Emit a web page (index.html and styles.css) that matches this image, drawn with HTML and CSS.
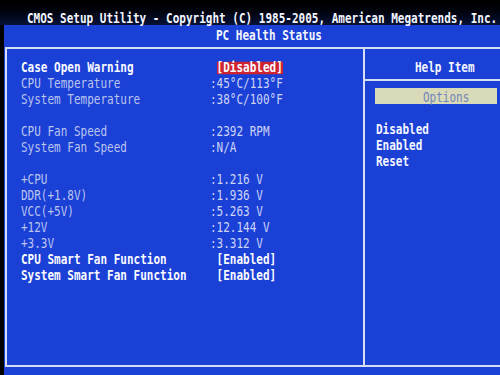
FILE: index.html
```html
<!DOCTYPE html>
<html lang="en">
<head>
    <meta charset="UTF-8">
    <meta name="viewport" content="width=device-width, initial-scale=1.0">
    <title>PC Health Status</title>
    <link rel="stylesheet" href="styles.css">
</head>
<body>
    <div class="monitor">
        <div class="topbar">
            <div class="row bright">CMOS Setup Utility - Copyright (C) 1985-2005, American Megatrends, Inc.</div>
        </div>

        <div class="screen">
            <div class="subtitle">
                <div class="row bright">PC Health Status</div>
            </div>

            <div class="frame">
                <div class="main">
                    <div class="row"><span class="label hi">Case Open Warning</span><span class="value"><span class="opt sel">[Disabled]</span></span></div>
                    <div class="row"><span class="label">CPU Temperature</span><span class="value">:45°C/113°F</span></div>
                    <div class="row"><span class="label">System Temperature</span><span class="value">:38°C/100°F</span></div>
                    <div class="row"></div>
                    <div class="row"><span class="label">CPU Fan Speed</span><span class="value">:2392 RPM</span></div>
                    <div class="row"><span class="label">System Fan Speed</span><span class="value">:N/A</span></div>
                    <div class="row"></div>
                    <div class="row"><span class="label">+CPU</span><span class="value">:1.216 V</span></div>
                    <div class="row"><span class="label">DDR(+1.8V)</span><span class="value">:1.936 V</span></div>
                    <div class="row"><span class="label">VCC(+5V)</span><span class="value">:5.263 V</span></div>
                    <div class="row"><span class="label">+12V</span><span class="value">:12.144 V</span></div>
                    <div class="row"><span class="label">+3.3V</span><span class="value">:3.312 V</span></div>
                    <div class="row"><span class="label hi">CPU Smart Fan Function</span><span class="value"><span class="opt hi">[Enabled]</span></span></div>
                    <div class="row"><span class="label hi">System Smart Fan Function</span><span class="value"><span class="opt hi">[Enabled]</span></span></div>
                </div>

                <div class="help">
                    <div class="help-head">
                        <div class="row bright">Help Item</div>
                    </div>
                    <div class="options">
                        <div class="row">Options</div>
                    </div>
                    <div class="help-list">
                        <div class="row bright">Disabled</div>
                        <div class="row bright">Enabled</div>
                        <div class="row bright">Reset</div>
                    </div>
                </div>
            </div>
        </div>
    </div>
</body>
</html>
```

FILE: styles.css
```css
/* Page reset */
html, body {
    margin: 0;
    padding: 0;
    background-color: #000;
}

/* Photographed monitor area */
.monitor {
    width: 500px;
    height: 375px;
    overflow: hidden;
    background-color: #000;
    font-family: "DejaVu Sans Mono", "Liberation Mono", monospace;
    font-size: 11px; /* 6.62px per column */
}

/* Text cells are tall and narrow like a BIOS font */
.row {
    height: 16px;
    line-height: 16px;
    white-space: nowrap;
    transform: translateY(2px) scaleY(1.25);
}
.bright {
    color: #f4f6ff;
    font-weight: 700;
}

/* Top title bar */
.topbar {
    height: 25px;
    box-sizing: border-box;
    padding: 9px 0 0 27px;
    background: linear-gradient(to bottom, #000 0, #01030c 45%, #061238 100%);
}

/* Blue screen */
.screen {
    margin-left: 4px;
    height: 350px;
    background-color: #1b40d6;
}

.subtitle {
    height: 22px;
    box-sizing: border-box;
    padding: 1px 0 0 212px;
}

/* Framed area */
.frame {
    display: flex;
    margin-left: 1px;
    width: 560px;
    height: 320px;
    box-sizing: border-box;
    border: 2px solid #d6ddf3;
    border-right: none;
}

.main {
    width: 356px;
    flex-shrink: 0;
    padding: 9px 0 0 14px;
    box-sizing: border-box;
}

.label {
    display: inline-block;
    width: 189px;
    color: #bac5ef;
}
.label.hi {
    color: #fafbff;
    font-weight: 700;
}

.value {
    color: #cdd5f6;
}
.opt {
    margin-left: 1ch;
    font-weight: 700;
    color: #fafbff;
}
.sel {
    display: inline-block;
    height: 10px;
    line-height: 10px;
    background-color: #cf2430;
}

/* Help panel */
.help {
    flex: 1;
    border-left: 2px solid #d6ddf3;
}

.help-head {
    height: 32px;
    box-sizing: border-box;
    padding: 9px 0 0 50px;
    border-bottom: 2px solid #d6ddf3;
}

.options {
    margin: 7px 0 0 10px;
    width: 122px;
    height: 16px;
    box-sizing: border-box;
    padding-left: 48px;
    background-color: #d9dab8;
}
.options .row {
    color: #7484b8;
}

.help-list {
    padding: 16px 0 0 11px;
}
```
